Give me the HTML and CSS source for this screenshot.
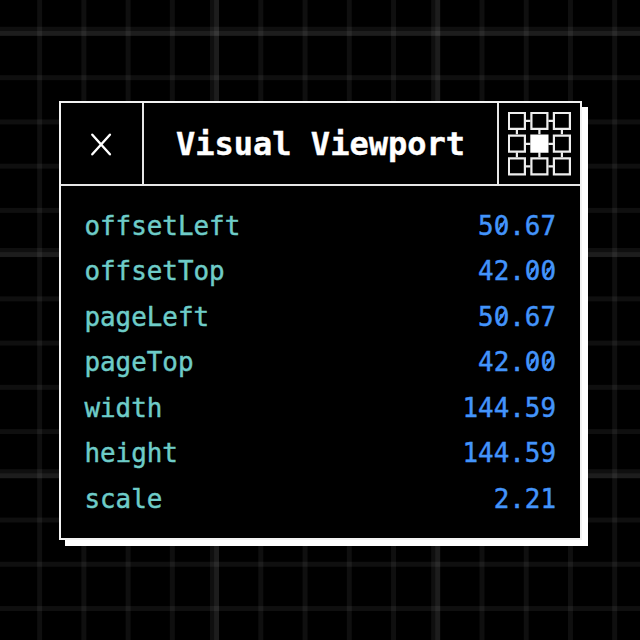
FILE: index.html
```html
<!DOCTYPE html>
<html lang="en">
<head>
<meta charset="utf-8">
<title>Visual Viewport</title>
<link rel="stylesheet" href="styles.css">
</head>
<body>
<main class="panel">
  <header class="head">
    <button class="close" aria-label="Close"><svg width="24" height="26" viewBox="0 0 24 26"><path d="M2.300 2.700 19.900 22.300M19.900 2.700 2.300 22.300"/></svg></button>
    <h1 class="title">Visual Viewport</h1>
    <div class="anchor">
      <svg width="66" height="66" viewBox="0.600 0.700 66 66">
        <path d="M18 9.500h5M41 9.500h5M18 32.500h5M41 32.500h5M18 55h5M41 55h5M9.500 18v5M32 18v5M54.500 18v5M9.500 41v5M32 41v5M54.500 41v5"/>
        <path d="M1.500 1.500h16v16h-16zM24 1.500h16v16h-16zM46.500 1.500h16v16h-16zM1.500 24.300h16v16h-16zM46.500 24.300h16v16h-16zM1.500 47h16v16h-16zM24 47h16v16h-16zM46.500 47h16v16h-16z"/>
        <path class="on" d="M24 24.300h16v16h-16z"/>
      </svg>
    </div>
  </header>
  <dl class="list">
    <div class="row"><dt>offsetLeft</dt><dd>5<span class="zero">0</span>.67</dd></div>
    <div class="row"><dt>offsetTop</dt><dd>42.<span class="zero">0</span><span class="zero">0</span></dd></div>
    <div class="row"><dt>pageLeft</dt><dd>5<span class="zero">0</span>.67</dd></div>
    <div class="row"><dt>pageTop</dt><dd>42.<span class="zero">0</span><span class="zero">0</span></dd></div>
    <div class="row"><dt>width</dt><dd>144.59</dd></div>
    <div class="row"><dt>height</dt><dd>144.59</dd></div>
    <div class="row"><dt>scale</dt><dd>2.21</dd></div>
  </dl>
</main>
</body>
</html>
```
FILE: styles.css
```css
* { box-sizing: border-box; }
html { height: 100%; background: #000; }
body {
  --line: rgba(255, 255, 255, .06);
  margin: 0;
  height: 640px;
  overflow: hidden;
  padding: 101px 58px 0 59px;
  font-family: Menlo, "DejaVu Sans Mono", monospace;
  background-image:
    linear-gradient(90deg, var(--line) 4.5px, transparent 4.5px),
    linear-gradient(var(--line) 4.5px, transparent 4.5px),
    linear-gradient(90deg, var(--line) 8.8px, transparent 8.8px),
    linear-gradient(var(--line) 8.8px, transparent 8.8px);
  background-size: 44.24px 640px, 640px 44.24px, 221.2px 640px, 640px 221.2px;
  background-position: 37.2px 0, 0 31px, 210px 0, 0 26.8px;
}
.panel {
  width: 523px;
  height: 439px;
  background: #000;
  border: 2px solid #f2f2f2;
  box-shadow: 6px 6px 0 #fff;
}
.head {
  display: grid;
  grid-template-columns: 83px 1fr 83px;
  height: 83px;
  border-bottom: 2px solid #e6e6e6;
}
.close {
  display: grid;
  place-items: center;
  padding: 1px 0 0;
  border: 0;
  border-right: 2px solid #e6e6e6;
  background: none;
}
.close svg { fill: none; stroke: #fff; stroke-width: 2.4; stroke-linecap: round; }
.title {
  margin: 0;
  color: #fff;
  font-size: 32px;
  line-height: 82px;
  text-align: center;
  white-space: nowrap;
  -webkit-text-stroke: .4px #fff;
}
.anchor {
  border-left: 2px solid #e6e6e6;
  padding: 9px 0 0 9px;
}
.anchor svg { display: block; fill: none; stroke: #eee; stroke-width: 2.2; }
.anchor .on { fill: #fff; stroke: #fff; }
.list { margin: 0; padding: 17.7px 24px 0 23.4px; }
.row {
  display: flex;
  justify-content: space-between;
  height: 45.55px;
  font-size: 25.9px;
  line-height: 45.55px;
  -webkit-text-stroke: .45px currentColor;
}
dt { color: #6eccc8; }
dd { margin: 0; color: #4394fb; }
.zero { position: relative; }
.zero::after {
  content: "";
  position: absolute;
  left: 1.6px;
  top: calc(50% - 1px);
  width: 12.5px;
  height: 1.8px;
  background: currentColor;
  transform: rotate(-55deg);
}
```
